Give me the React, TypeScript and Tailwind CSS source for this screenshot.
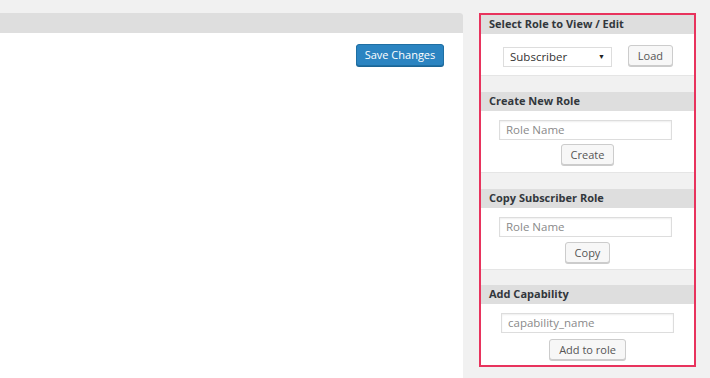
import React from 'react';

const font = { fontFamily: '"Open Sans", "Noto Sans", sans-serif' };

const SecondaryButton = ({ label, className = '' }: { label: string; className?: string }) => (
  <button
    className={`h-[21px] px-[9px] rounded-[3px] border border-[#cccccc] bg-[#f7f7f7] text-[11px] leading-none text-[#555555] shadow-[0_1px_0_#cccccc] ${className}`}
  >
    {label}
  </button>
);

const TextInput = ({ placeholder, className = '' }: { placeholder: string; className?: string }) => (
  <div
    className={`w-[173px] h-[20px] border border-[#dddddd] bg-white flex items-center px-[6px] text-[11.5px] text-[#8a8a8a] shadow-[inset_0_1px_2px_rgba(0,0,0,0.07)] ${className}`}
  >
    {placeholder}
  </div>
);

const Section = ({
  title,
  children,
  bodyClass,
  className = '',
}: {
  title: string;
  children: React.ReactNode;
  bodyClass: string;
  className?: string;
}) => (
  <div className={`flex flex-col ${className}`}>
    <div className="h-[19px] bg-[#dedede] flex items-center pl-[8px] text-[11px] font-bold text-[#32373c]">
      {title}
    </div>
    <div className={`bg-white border-b border-[#e5e5e5] ${bodyClass}`}>{children}</div>
  </div>
);

export default function App() {
  return (
    <div className="w-[710px] h-[378px] bg-[#f1f1f1] flex pt-[13px] overflow-hidden" style={font}>
      {/* main settings panel */}
      <div className="w-[463px] h-[365px] bg-white rounded-tr-[3px] flex flex-col">
        <div className="h-[20px] bg-[#dedede] rounded-tr-[3px]" />
        <div className="flex justify-end pr-[19px] pt-[11px]">
          <button className="h-[22px] w-[88px] rounded-[3px] border border-[#1f6fa3] bg-[#2b84c1] text-[11px] text-white shadow-[0_1px_0_#1b6596]">
            Save Changes
          </button>
        </div>
      </div>

      {/* sidebar */}
      <div className="ml-[16px] w-[217px] h-[354px] border-2 border-[#e8335d] flex flex-col">
        <Section title="Select Role to View / Edit" bodyClass="h-[42px] flex items-start pl-[22px] pr-[21px] justify-between">
          <div className="mt-[13px] w-[109px] h-[20px] border border-[#dddddd] bg-white flex items-center justify-between px-[6px] text-[11.5px] text-[#333333]">
            <span>Subscriber</span>
            <span className="text-[7px] text-[#222222]">▼</span>
          </div>
          <SecondaryButton label="Load" className="mt-[11px]" />
        </Section>

        <div className="h-[16px]" />

        <Section title="Create New Role" bodyClass="h-[62px] flex flex-col items-center pt-[9px] gap-[4px]">
          <TextInput placeholder="Role Name" className="mr-[4px]" />
          <SecondaryButton label="Create" />
        </Section>

        <div className="h-[16px]" />

        <Section title="Copy Subscriber Role" bodyClass="h-[62px] flex flex-col items-center pt-[9px] gap-[5px]">
          <TextInput placeholder="Role Name" className="mr-[4px]" />
          <SecondaryButton label="Copy" />
        </Section>

        <div className="h-[15px]" />

        <Section title="Add Capability" className="flex-1" bodyClass="flex-1 flex flex-col items-center pt-[9px] gap-[6px] border-b-0">
          <TextInput placeholder="capability_name" />
          <SecondaryButton label="Add to role" />
        </Section>
      </div>
    </div>
  );
}
